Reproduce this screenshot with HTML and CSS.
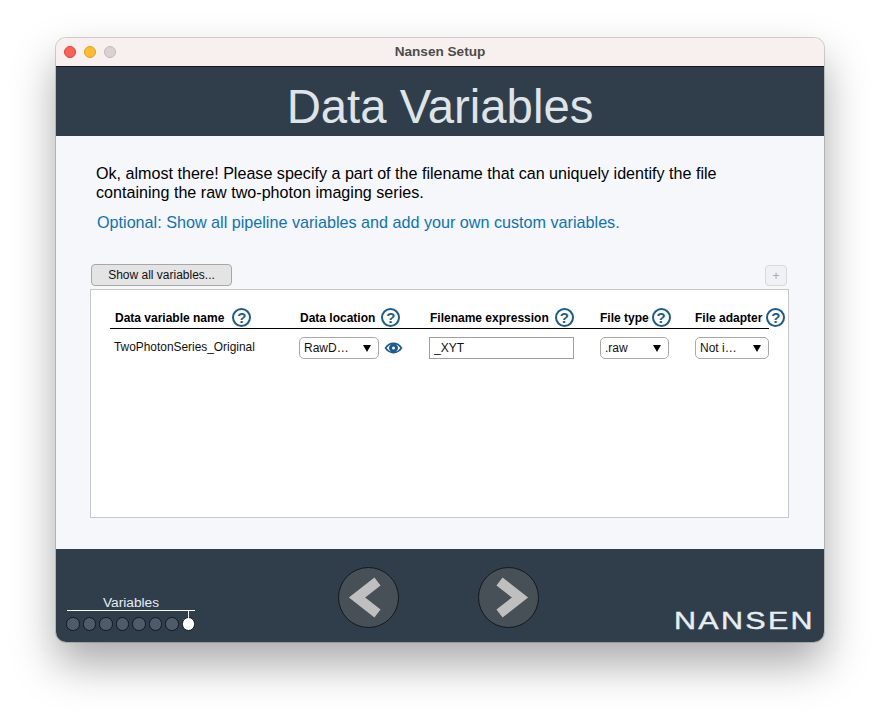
FILE: index.html
```html
<!DOCTYPE html>
<html lang="en">
<head>
    <meta charset="UTF-8">
    <title>Nansen Setup</title>
    <link rel="stylesheet" href="styles.css">
</head>
<body>
    <div class="window">
        <div class="title_bar">
            <div class="lights">
                <span class="light light_close"></span>
                <span class="light light_min"></span>
                <span class="light light_max"></span>
            </div>
            <div class="window_title">Nansen Setup</div>
        </div>
        <header class="page_header">Data Variables</header>
        <main class="content">
            <p class="intro">Ok, almost there! Please specify a part of the filename that can uniquely identify the file containing the raw two-photon imaging series.</p>
            <p class="optional">Optional: Show all pipeline variables and add your own custom variables.</p>
            <div class="toolbar">
                <button class="show_btn">Show all variables...</button>
                <button class="add_btn">+</button>
            </div>
            <div class="panel">
                <div class="var_table">
                    <div class="head_cell head_name">Data variable name<span class="help help_name">?</span></div>
                    <div class="head_cell">Data location<span class="help help_loc">?</span></div>
                    <div class="head_cell">Filename expression<span class="help help_expr">?</span></div>
                    <div class="head_cell head_type">File type<span class="help help_type">?</span></div>
                    <div class="head_cell head_adapter">File adapter<span class="help help_adapter">?</span></div>

                    <div class="var_name">TwoPhotonSeries_Original</div>
                    <div class="loc_cell">
                        <div class="select select_loc"><span>RawD…</span><i class="arrow"></i></div>
                        <svg class="eye" width="19" height="12" viewBox="0 0 19 12">
                            <path d="M0.5 6C3 2.3 6 0.6 9.5 0.6S16 2.3 18.5 6C16 9.7 13 11.4 9.5 11.4S3 9.7 0.5 6Z" fill="#1b5c8c"/>
                            <path d="M2.6 6C4.6 3.6 6.2 2.5 7.4 2.2A4.2 4.2 0 0 0 7.4 9.8C6.2 9.4 4.6 8.4 2.6 6ZM16.4 6C14.4 3.6 12.8 2.5 11.6 2.2A4.2 4.2 0 0 1 11.6 9.8C12.8 9.4 14.4 8.4 16.4 6Z" fill="#f5f7fb"/>
                            <circle cx="9.5" cy="6" r="1.5" fill="#f5f7fb"/>
                        </svg>
                    </div>
                    <div><input class="expr_input" type="text" value="_XYT"></div>
                    <div class="select select_type"><span>.raw</span><i class="arrow"></i></div>
                    <div class="select select_adapter"><span>Not i…</span><i class="arrow"></i></div>
                </div>
            </div>
        </main>
        <footer class="page_footer">
            <div class="progress">
                <div class="step_label">Variables</div>
                <div class="step_line"></div>
                <div class="dots">
                    <span class="dot"></span>
                    <span class="dot"></span>
                    <span class="dot"></span>
                    <span class="dot"></span>
                    <span class="dot"></span>
                    <span class="dot"></span>
                    <span class="dot"></span>
                    <span class="dot dot_active"></span>
                </div>
            </div>
            <div class="nav">
                <svg class="nav_btn" width="61" height="61" viewBox="0 0 61 61">
                    <circle cx="30.5" cy="30.5" r="30" fill="#474f57" stroke="#14181c"/>
                    <polyline points="39.5,14.5 19,30.5 39.5,46.5" fill="none" stroke="#bfbfbf" stroke-width="10"/>
                </svg>
                <svg class="nav_btn" width="61" height="61" viewBox="0 0 61 61">
                    <circle cx="30.5" cy="30.5" r="30" fill="#474f57" stroke="#14181c"/>
                    <polyline points="21.5,14.5 42,30.5 21.5,46.5" fill="none" stroke="#bfbfbf" stroke-width="10"/>
                </svg>
            </div>
            <div class="logo">NANSEN</div>
        </footer>
    </div>
</body>
</html>
```

FILE: styles.css
```css
html,
body {
    margin: 0;
    height: 716px;
    overflow: hidden;
}
body {
    padding: 38px 56px 0 56px;
    box-sizing: border-box;
    background-color: #ffffff;
    font-family: "Liberation Sans", Arial, sans-serif;
}
.window {
    height: 604px;
    display: flex;
    flex-direction: column;
    border-radius: 10px;
    overflow: hidden;
    box-shadow: 0 0 0 1px rgba(0, 0, 0, 0.16), 0 22px 44px rgba(0, 0, 0, 0.34);
}
.title_bar {
    height: 28px;
    flex: none;
    display: flex;
    align-items: center;
    justify-content: center;
    position: relative;
    background-color: #f8f0ee;
    border-bottom: 1px solid #15191e;
}
.lights {
    position: absolute;
    left: 8px;
    top: 8px;
    display: flex;
    gap: 8px;
}
.light {
    width: 12px;
    height: 12px;
    box-sizing: border-box;
    border-radius: 50%;
    border: 1px solid;
}
.light_close {
    background-color: #fe5f57;
    border-color: #e0443e;
}
.light_min {
    background-color: #febc2e;
    border-color: #dea123;
}
.light_max {
    background-color: #d9d2d0;
    border-color: #c2bab8;
}
.window_title {
    margin-bottom: 2px;
    font-size: 13.6px;
    font-weight: bold;
    color: #4c4c4c;
}
.page_header {
    height: 69px;
    flex: none;
    text-align: center;
    font-size: 47.3px;
    line-height: 79px;
    color: #dfe4e8;
    background-color: #303e4c;
}
.content {
    flex: 1;
    padding: 28px 35px 0 34px;
    background-color: #f5f7fb;
}
.intro {
    margin: 0 30px 0 6px;
    font-size: 16.13px;
    line-height: 19px;
    color: #000000;
}
.optional {
    margin: 11px 0 0 7px;
    font-size: 16.16px;
    line-height: 19px;
    color: #0f72ba;
}
.toolbar {
    display: flex;
    justify-content: space-between;
    align-items: flex-end;
    margin: 32px 2px 3px 1px;
}
.show_btn {
    width: 141px;
    height: 22px;
    padding: 0;
    font-family: inherit;
    font-size: 12px;
    color: #111111;
    background-color: #e4e4e4;
    border: 1px solid #a8a8a8;
    border-radius: 4px;
}
.add_btn {
    width: 22px;
    height: 21px;
    padding: 0;
    font-family: inherit;
    font-size: 12px;
    color: #a8a8a8;
    background-color: #f0f1f4;
    border: 1px solid #d8d8d8;
    border-radius: 4px;
}
.panel {
    height: 229px;
    box-sizing: border-box;
    padding: 0 0 0 19px;
    background-color: #ffffff;
    border: 1px solid #c8c8c8;
}
.var_table {
    width: 659px;
    display: grid;
    grid-template-columns: 189px 130px 171px 95px 74px;
    grid-template-rows: 39px 22px;
    row-gap: 8px;
    font-size: 12px;
}
.head_cell {
    display: flex;
    align-items: center;
    padding: 18px 0 1px 1px;
    font-size: 12px;
    font-weight: bold;
    color: #000000;
    white-space: nowrap;
    border-bottom: 1px solid #000000;
    box-sizing: border-box;
}
.head_name {
    padding-left: 5px;
}
.head_type,
.head_adapter {
    padding-left: 0;
}
.help {
    flex: none;
    width: 19px;
    height: 19px;
    box-sizing: border-box;
    text-align: center;
    font-size: 15px;
    line-height: 16px;
    color: #1b5c8c;
    background-color: #ffffff;
    border: 2px solid #1b5c8c;
    border-radius: 50%;
}
.help_name {
    margin-left: 8px;
}
.help_loc {
    margin-left: 6px;
}
.help_expr {
    margin-left: 6px;
}
.help_type {
    margin-left: 3px;
}
.help_adapter {
    margin-left: 4px;
}
.var_name {
    align-self: center;
    padding: 0 0 2px 4px;
    font-size: 11.9px;
    color: #111111;
}
.loc_cell {
    display: flex;
    align-items: center;
    gap: 5px;
}
.select {
    height: 22px;
    box-sizing: border-box;
    display: flex;
    align-items: center;
    justify-content: space-between;
    padding: 0 7px 0 4px;
    font-size: 12px;
    color: #111111;
    background-color: #ffffff;
    border: 1px solid #a8a8a8;
    border-radius: 5px;
}
.select_loc {
    width: 80px;
}
.select_type {
    width: 69px;
}
.select_adapter {
    width: 74px;
}
.arrow {
    width: 0;
    height: 0;
    border-left: 4.5px solid transparent;
    border-right: 4.5px solid transparent;
    border-top: 7px solid #000000;
}
.expr_input {
    display: block;
    width: 145px;
    height: 22px;
    box-sizing: border-box;
    padding: 0 4px;
    font-family: inherit;
    font-size: 12px;
    color: #111111;
    background-color: #ffffff;
    border: 1px solid #a0a0a0;
    border-radius: 0;
    outline: none;
}
.page_footer {
    height: 93px;
    flex: none;
    display: grid;
    grid-template-columns: 282px 201px 1fr;
    background-color: #303e4c;
}
.progress {
    padding: 47px 0 0 10px;
}
.step_label {
    width: 130px;
    text-align: center;
    font-size: 13.7px;
    line-height: 14px;
    color: #e8edf0;
}
.step_line {
    width: 128px;
    height: 7px;
    margin-left: 1px;
    box-sizing: border-box;
    border-top: 1px solid #ffffff;
    position: relative;
}
.step_line::after {
    content: "";
    position: absolute;
    right: 6px;
    top: 0;
    width: 1px;
    height: 7px;
    background-color: #e8edf0;
}
.dots {
    display: flex;
    gap: 3px;
}
.dot {
    width: 13.5px;
    height: 13.5px;
    box-sizing: border-box;
    border-radius: 50%;
    background-color: #4f5b6b;
    border: 1px solid #14181c;
}
.dot_active {
    background-color: #ffffff;
}
.nav {
    display: flex;
    justify-content: space-between;
    padding-top: 18px;
}
.nav_btn {
    display: block;
}
.logo {
    align-self: end;
    justify-self: end;
    margin: 0 9px 9px 0;
    font-size: 24px;
    line-height: 24px;
    letter-spacing: 1.8px;
    color: #e8edf0;
    -webkit-text-stroke: 0.4px #e8edf0;
    transform: scaleX(1.27);
    transform-origin: right center;
}
```
